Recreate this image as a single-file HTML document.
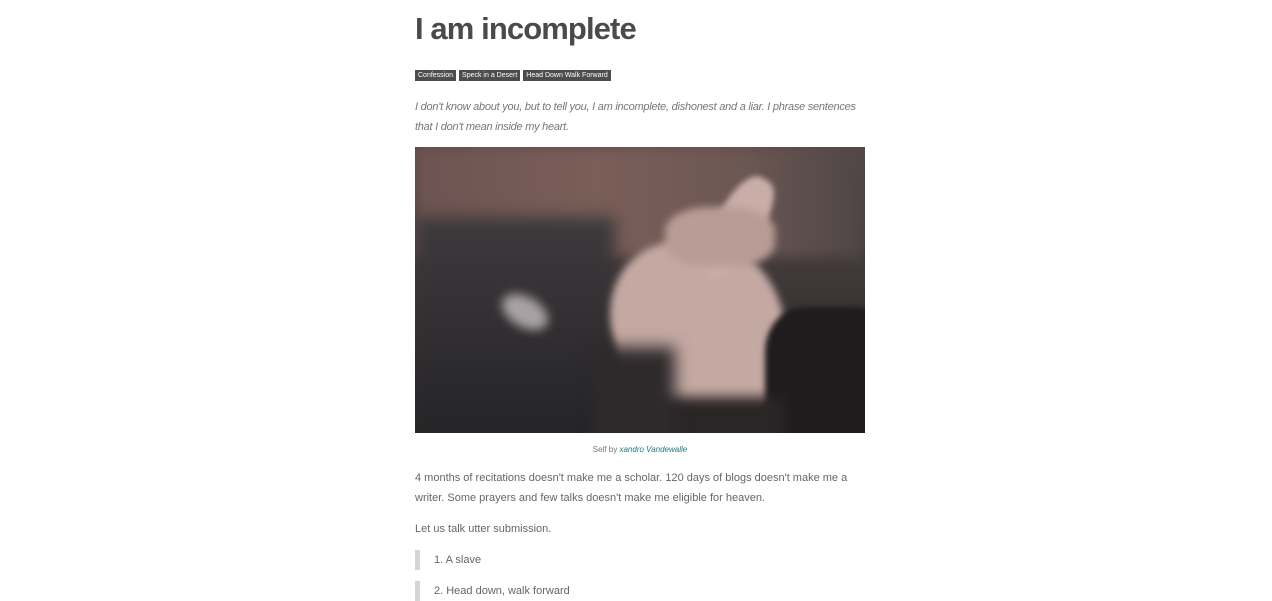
<!DOCTYPE html>
<html><head><style>
body{margin:0;background:#fff;font-family:"Liberation Sans",Arial,sans-serif;color:#666;}
.c{position:absolute;left:415px;width:450px;}
h1{position:absolute;left:415px;top:11px;margin:0;font-size:31px;font-weight:bold;color:#4a4a4a;letter-spacing:-0.9px;}
.tags{position:absolute;left:415px;top:70px;font-size:7px;}
.tags span{background:#4d4d4d;color:#fff;padding:1px 3px;margin-right:3px;display:inline-block;line-height:9px;}
p{margin:0;font-size:11px;line-height:20px;}
.img{position:absolute;left:415px;top:147px;width:450px;height:286px;overflow:hidden;
background:linear-gradient(180deg,#5e4a48 0%,#4a3e3e 25%,#3a3536 55%,#2a2628 100%);}
.img div{position:absolute;}
</style></head><body>
<h1>I am incomplete</h1>
<div class="tags"><span>Confession</span><span>Speck in a Desert</span><span>Head Down Walk Forward</span></div>
<p class="c" style="top:97px;font-style:italic;color:#777;letter-spacing:-0.25px;width:460px;">I don't know about you, but to tell you, I am incomplete, dishonest and a liar. I phrase sentences that I don't mean inside my heart.</p>
<div class="img">
<div style="left:0;top:0;width:450px;height:110px;background:linear-gradient(90deg,#6d5452,#7a5e58 40%,#6e5854 70%,#4e4646);filter:blur(6px);"></div>
<div style="left:0;top:70px;width:200px;height:216px;background:linear-gradient(180deg,#3d3a3d,#252426);filter:blur(8px);"></div>
<div style="left:85px;top:150px;width:50px;height:30px;background:#a9a1a3;border-radius:50%;filter:blur(5px);transform:rotate(30deg);"></div>
<div style="left:200px;top:90px;width:170px;height:190px;background:#c4a9a2;border-radius:40% 50% 30% 40%;filter:blur(4px);transform:rotate(-15deg);"></div>
<div style="left:300px;top:25px;width:45px;height:110px;background:#c9aea8;border-radius:40%;filter:blur(3px);transform:rotate(30deg);"></div>
<div style="left:250px;top:60px;width:110px;height:60px;background:#b99c95;border-radius:40%;filter:blur(4px);"></div>
<div style="left:350px;top:160px;width:130px;height:150px;background:#1f1c1e;border-radius:30%;filter:blur(3px);"></div>
<div style="left:230px;top:250px;width:140px;height:60px;background:#2a2526;filter:blur(6px);"></div>
<div style="left:180px;top:200px;width:80px;height:100px;background:#2e2a2c;filter:blur(8px);"></div>
</div>
<p class="c" style="top:442px;font-size:8px;text-align:center;line-height:16px;color:#777;">Self by <i style="color:#1f7a80;">xandro Vandewalle</i></p>
<p class="c" style="top:468px;">4 months of recitations doesn't make me a scholar. 120 days of blogs doesn't make me a writer. Some prayers and few talks doesn't make me eligible for heaven.</p>
<p class="c" style="top:519px;">Let us talk utter submission.</p>
<div class="c" style="top:550px;border-left:5px solid #d5d5d5;height:20px;"><p style="padding-left:14px;">1. A slave</p></div>
<div class="c" style="top:581px;border-left:5px solid #d5d5d5;height:20px;"><p style="padding-left:14px;">2. Head down, walk forward</p></div>
</body></html>
